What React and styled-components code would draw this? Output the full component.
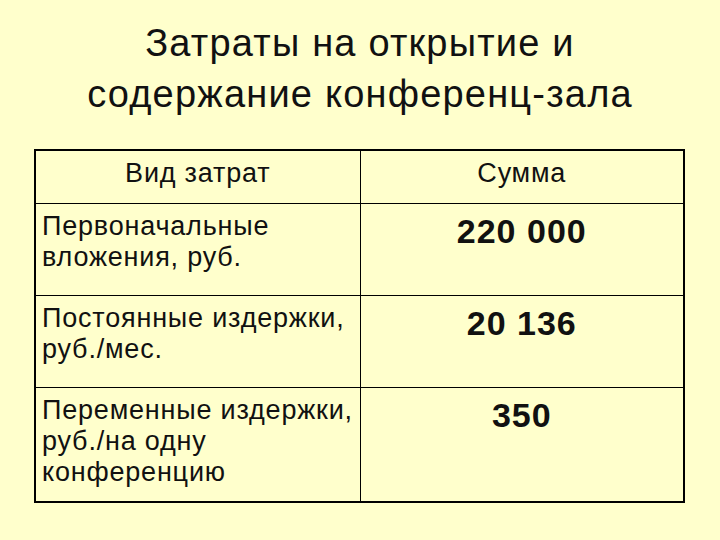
import React from 'react'
import styled, { createGlobalStyle } from 'styled-components'

const GlobalStyle = createGlobalStyle`
  html, body {
    margin: 0;
    padding: 0;
    background: #ffffcc;
  }
  body {
    font-family: "Liberation Sans", Arial, sans-serif;
    color: #000;
  }
`

const Slide = styled.div`
  width: 720px;
  height: 540px;
  box-sizing: border-box;
  padding-top: 18px;
  background: #ffffcc;
  display: flex;
  flex-direction: column;
  align-items: center;
`

const Title = styled.h1`
  margin: 0;
  font-size: 38px;
  font-weight: normal;
  letter-spacing: 1.2px;
  line-height: 51px;
  text-align: center;
  color: #111;
`

const Table = styled.table`
  margin-top: 29px;
  margin-left: -1px;
  width: 649px;
  border-collapse: collapse;
  border: 2px solid #000;
  table-layout: fixed;
`

const Row = styled.tr`
  height: ${props => props.h}px;
`

const Cell = styled.td`
  border: 1px solid #000;
  padding: 7px 6px 4px;
  vertical-align: top;
  text-align: ${props => props.center ? 'center' : 'left'};
  font-size: 27px;
  letter-spacing: 0.8px;
  line-height: 31px;
  color: #111;
`

const Amount = styled.span`
  display: block;
  font-size: 34px;
  font-weight: bold;
  letter-spacing: 1px;
  line-height: 40px;
  color: #111;
`

const rows = [
  { name: ['Первоначальные', 'вложения, руб.'], sum: '220 000', h: 92 },
  { name: ['Постоянные издержки,', 'руб./мес.'], sum: '20 136', h: 92 },
  { name: ['Переменные издержки,', 'руб./на одну', 'конференцию'], sum: '350', h: 115 }
]

export default function App() {
  return (
    <Slide>
      <GlobalStyle />
      <Title>
        Затраты на открытие и<br />
        содержание конференц-зала
      </Title>
      <Table>
        <colgroup>
          <col style={{ width: 325 }} />
          <col style={{ width: 324 }} />
        </colgroup>
        <tbody>
          <Row h={53}>
            <Cell center>Вид затрат</Cell>
            <Cell center>Сумма</Cell>
          </Row>
          {rows.map(r => (
            <Row key={r.sum} h={r.h}>
              <Cell>
                {r.name.map((line, i) => (
                  <React.Fragment key={i}>
                    {i > 0 && <br />}
                    {line}
                  </React.Fragment>
                ))}
              </Cell>
              <Cell center>
                <Amount>{r.sum}</Amount>
              </Cell>
            </Row>
          ))}
        </tbody>
      </Table>
    </Slide>
  )
}
